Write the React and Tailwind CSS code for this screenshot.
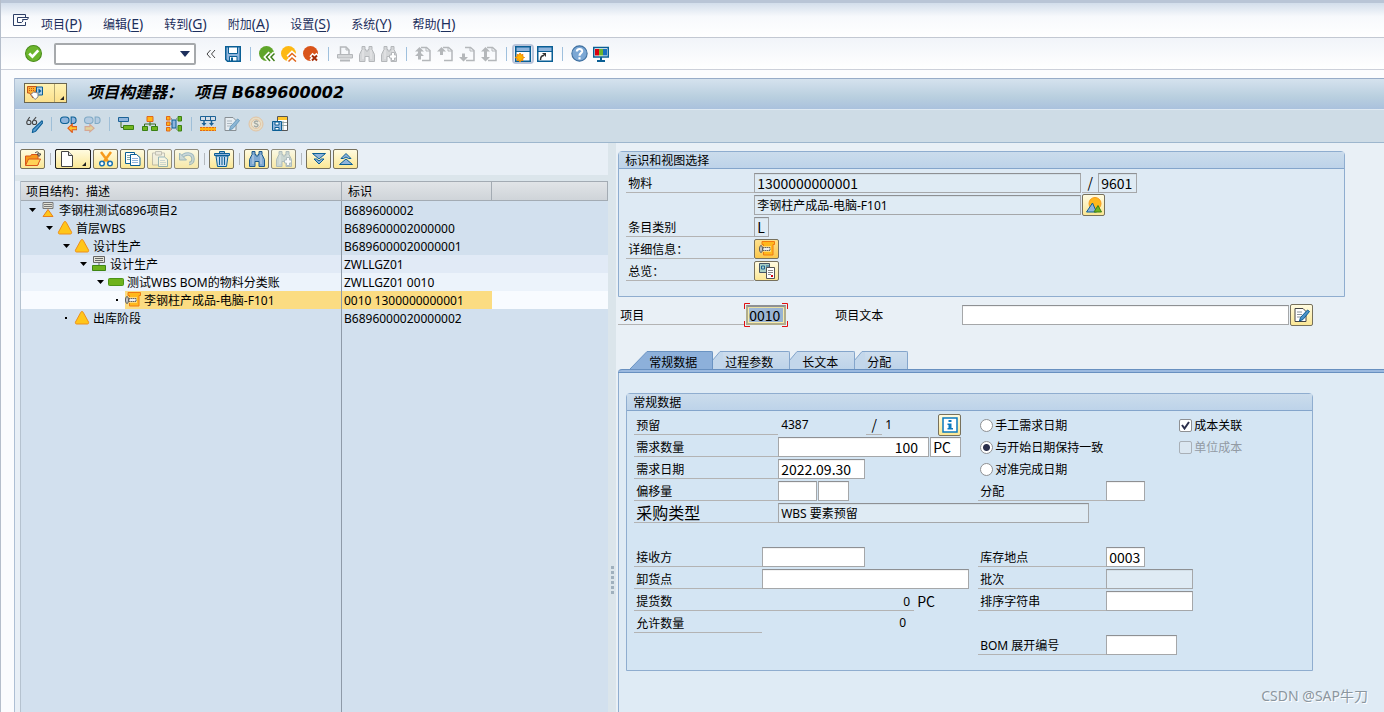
import clsx from 'clsx';

const SANS = "font-['Noto_Sans','Noto_Sans_CJK_SC',sans-serif]";
const CODE = "font-['Noto_Sans_CJK_SC',sans-serif]";

const BLUE = '#0a5f95';
const SKY = '#8fb4dc';
const GRAY = '#b4b7ba';

function Svg({ children, className = 'size-4', box = '0 0 16 16' }) {
  return (
    <svg viewBox={box} className={clsx('shrink-0', className)} fill="none" aria-hidden="true">
      {children}
    </svg>
  );
}

function Binoculars({ fill, stroke, plus }) {
  return (
    <Svg>
      <path d="M3 .500h3v3h1V5h2V3.500h1v-3h3v3l2.500 5v7H10V10.500H6v5H.500v-7L3 3.500z" fill={fill} stroke={stroke} />
      <path d="M4 4v9M12 4v9" stroke="#fff" strokeOpacity=".5" />
      {plus && <path d="M10.500 6.500h3v2.500h2v3h-2v2.500h-3V12h-2V9h2z" fill="#fff" stroke={stroke} />}
    </Svg>
  );
}

function PageNav({ up, down, top }) {
  return (
    <Svg>
      <path d="M6 1.500h5.500l3.500 3v10H7" stroke={GRAY} strokeWidth="1.500" />
      <path d="M11 1.500v3.500h4" stroke={GRAY} />
      {up && <path d="M4.500 1 0 5.500h3V9h3V5.500h3z" fill={GRAY} />}
      {top && <path d="M4.500 5.500 0 10h3v3.500h3V10h3z" fill={GRAY} />}
      {down && <path d="M4.500 15.500 0 11h3V7.500h3V11h3z" fill={GRAY} />}
    </Svg>
  );
}

const CircleIcon = ({ fill, children }) => (
  <Svg>
    <circle cx="7.500" cy="7.500" r="7.500" fill={fill} />
    {children}
  </Svg>
);

const CheckIcon = () => (
  <Svg className="size-[17px]">
    <circle cx="8" cy="8" r="7.500" fill="#6cb52d" stroke="#4a8c1c" />
    <path d="m4 8 3 3 5.500-6" stroke="#fff" strokeWidth="2.500" />
  </Svg>
);

const SaveIcon = () => (
  <Svg>
    <path d="M.750.750h14.500v14.500H2.500L.750 13.500z" fill={SKY} stroke={BLUE} strokeWidth="1.500" />
    <path d="M3.500 1h9v6.500h-9z" fill="#fff" stroke={BLUE} />
    <path d="M4.500 10.500h7.500V15H4.500z" fill="#fff" stroke={BLUE} />
    <path d="M6 11.500h2V15H6z" fill={BLUE} />
  </Svg>
);

const BackIcon = () => (
  <CircleIcon fill="#5fa52a">
    <path d="M11 7 7 11l4 4.500M15.500 7l-4 4 4 4.500" stroke="#fff" strokeWidth="4" />
    <path d="M11 7.500 7.500 11l3.500 4M15.500 7.500 12 11l3.500 4" stroke="#3d7d17" strokeWidth="1.500" />
  </CircleIcon>
);

const ExitIcon = () => (
  <CircleIcon fill="#fdb813">
    <path d="m7 11 4-4 4.500 4M7 15.500l4-4 4.500 4" stroke="#fff" strokeWidth="4" />
    <path d="m7.500 11 3.500-3.500 4 3.500M7.500 15.500 11 12l4 3.500" stroke="#e0661c" strokeWidth="1.500" />
  </CircleIcon>
);

const CancelIcon = () => (
  <CircleIcon fill="#d9541a">
    <path d="m8 8.500 7 6.500M15 8.500 8 15" stroke="#fff" strokeWidth="4.500" />
    <path d="m9 9.500 5 5M14 9.500l-5 5" stroke="#a32c08" strokeWidth="2" />
  </CircleIcon>
);

const PrintIcon = () => (
  <Svg>
    <path d="M3.500 8V1h5.500l3 3v4" stroke={GRAY} strokeWidth="1.500" />
    <path d="M9 1v3h3" stroke={GRAY} />
    <path d="M.500 8.500h15v3.500H.500z" fill="#d4d6d8" stroke={GRAY} />
    <path d="M3 14.500h10" stroke={GRAY} strokeWidth="2" />
  </Svg>
);

const NewSessionIcon = () => (
  <Svg>
    <path d="M.750.750h14.500v14.500H.750z" fill="#fff" stroke={BLUE} strokeWidth="1.500" />
    <path d="M1 1h14v4.500H1z" fill={SKY} stroke={BLUE} />
    <path d="m5 7 1 2 2-.5-.500 2 2 1-2 1 .500 2L6 14l-1 2-1-2-2 .500.500-2-2.500-1 2.500-1-.500-2L4 9z" fill="#ffb400" stroke="#f08a00" />
  </Svg>
);

const ShortcutIcon = () => (
  <Svg>
    <path d="M.750.750h14.500v14.500H.750z" fill="#fff" stroke={BLUE} strokeWidth="1.500" />
    <path d="M1 1h14v4.500H1z" fill={SKY} stroke={BLUE} />
    <path d="M3.500 14c0-3 1-4.500 3.500-4.500" stroke="#333" strokeWidth="1.500" />
    <path d="M5 7h4v4z" fill="#333" />
  </Svg>
);

const HelpIcon = () => (
  <Svg className="size-[17px]">
    <circle cx="8" cy="8" r="7.200" fill="#7ba7d4" stroke="#3e6f9f" />
    <path d="M5.500 6.200C5.500 3 10.800 3 10.500 6 10.300 7.600 8 7.800 8 10" stroke="#fff" strokeWidth="2" />
    <path d="M7 11.500h2v2H7z" fill="#fff" />
  </Svg>
);

const MonitorIcon = () => (
  <Svg>
    <path d="M.750 1.500h14.500v9.500H.750z" fill="#fff" stroke={BLUE} strokeWidth="1.500" />
    <path d="M2 3h4v6.500H2z" fill="#d9000d" />
    <path d="M6 3h4v6.500H6z" fill="#6cb52d" />
    <path d="M10 3h4v6.500h-4z" fill="#1a6fc0" />
    <path d="M8 11v3M4 15h8" stroke={BLUE} strokeWidth="2" />
  </Svg>
);

const MenuIcon = () => (
  <Svg className="h-3 w-4" box="0 0 16 12">
    <path d="M12.500 8v3.500h-12V.500h12V3" stroke="#2c3e66" />
    <path d="M4.500 3.500h11l-1 2H9.500l.500 1.500-1.500 1.500h-4z" fill="#fff" stroke="#2c3e66" />
  </Svg>
);

const GlassesIcon = () => (
  <Svg className="size-[17px]">
    <circle cx="2.700" cy="6" r="2" stroke="#444" />
    <circle cx="8" cy="6" r="2" stroke="#444" />
    <path d="m1.500 4 2-3M7 4l2.500-3" stroke="#444" />
    <path d="M15 4.500 16 6l-7 8.500-3 1 .500-3z" fill="#5b9bd0" stroke="#0a5f95" />
  </Svg>
);

const LinkArrowIcon = ({ faded, reverse }) => (
  <Svg className={clsx('size-[17px]', faded && 'opacity-40')}>
    <rect x=".5" y="1" width="8" height="6" rx="3" fill={SKY} stroke={BLUE} />
    <path d="M10.500 1h2C16 1 16 7 12.500 7h-2z" fill={SKY} stroke={BLUE} />
    <path
      d={reverse ? 'M9.500 11.500 5.500 8v2H1v3.500h4.500V15z' : 'm7.500 11.500 4-4V10H16v3h-4.500v2.500z'}
      fill="#ffc72c"
      stroke="#e05a1c"
    />
  </Svg>
);

const StepBarsIcon = () => (
  <Svg>
    <path d="M.500 1.500h10v4H.500z" fill={SKY} stroke="#1c6296" />
    <path d="M3 6v5.500h3" stroke="#3a6a20" />
    <path d="M5.500 9.500h10v4h-10z" fill="#72b51f" stroke="#3a8014" />
  </Svg>
);

const HierarchyIcon = () => (
  <Svg>
    <path d="M8 5v5M2.500 11V8h11v3" stroke="#3a6a20" />
    <path d="M5 .500h6v5H5z" fill="#ffb414" stroke="#e0661c" />
    <path d="M.500 10.500h5v4h-5zM9.500 10.500h6v4h-6z" fill="#72b51f" stroke="#3a8014" />
  </Svg>
);

const NetworkIcon = () => (
  <Svg>
    <path d="M3 3h3M3 8h3M3 13h3M10 3h3M10 13h3" stroke="#555" strokeDasharray="1" />
    <path d="M.500.500H4V4H.500zM.500 6H4v3.500H.500zM.500 11.500H4V15H.500z" fill="#ffb414" stroke="#e0661c" />
    <path d="M6 4h4v8H6z" fill={SKY} stroke={BLUE} />
    <path d="M12 .500h3.500V5H12zM12 9.500h3.500V15H12z" fill="#72b51f" stroke="#3a8014" />
  </Svg>
);

const PlanIcon = () => (
  <Svg>
    <path d="M.500.500h15v4H.500zM5.500.500v4M10.500.500v4" fill="#d4dde6" stroke="#1c6296" />
    <path d="M4 5v3M11.500 5v3" stroke="#1c6296" strokeWidth="1.500" />
    <path d="M1.500 7h5L4 10zM9 7h5l-2.500 3z" fill="#1c6296" />
    <path d="M0 11h16v4H0z" fill="#ffb414" />
    <path d="M0 11.500h16M0 14.500h16" stroke="#e0661c" strokeDasharray="2 1" />
  </Svg>
);

const NoteIcon = ({ faded }) => (
  <Svg className={clsx('size-4', faded && 'opacity-50')}>
    <path d="M1 1.500h8l3 3v10H1z" fill="#fff" stroke="#444" />
    <path d="M3 5h5M3 7.500h5M3 10h4" stroke="#8a949c" />
    <path d="m15.500 4.500-2-1.500-7 7.500-1 3.500 3.500-1.500z" fill="#4d92c8" stroke="#0a5f95" />
  </Svg>
);

const CostIcon = () => (
  <Svg className="size-4 opacity-60">
    <circle cx="8" cy="8" r="7" fill="#f6deb0" stroke="#efb478" />
    <circle cx="8" cy="8" r="4.500" fill="#fff3d6" stroke="#efb478" />
    <path d="M10 6c-1-1.500-4-1-3.500.700.500 1.300 3.500 1 3.500 2.500 0 1.800-3 2-4 .500" stroke="#8a8a7a" strokeWidth="1.500" />
  </Svg>
);

const CopySaveIcon = () => (
  <Svg>
    <path d="M5.500.500h10v14h-10z" fill="#fff" stroke="#555" />
    <path d="M6 1h9v3H6z" fill="#ffc72c" />
    <path d="M8 6.500h7M8 9.500h7M11 5v9" stroke="#9aa" />
    <path d="M.500 5.500h9v9h-9z" fill={SKY} stroke={BLUE} />
    <path d="M3 6h4v3H3zM3 11.500h4V14H3z" fill="#fff" stroke={BLUE} />
  </Svg>
);

const ObjectIcon = () => (
  <Svg className="h-3.5 w-[17px]" box="0 0 17 14">
    <path d="M.500.500h9V5H8v2.500H4.500L6 12 2.500 7H.500z" fill="#fbb034" stroke="#c8541a" />
    <path d="M2 2.500h6M2 4.500h5" stroke="#c8541a" strokeDasharray="1" />
    <path d="M9.500 1h6v8h-6z" fill="#a9cdea" stroke={BLUE} />
    <path d="m11.500 2.500 3 2.500-3 2.500z" fill={BLUE} />
    <path d="M4 8.500 6.500 6 11 7v4l-3 2.500z" fill="#fff" stroke="#888" />
  </Svg>
);

const FolderIcon = () => (
  <Svg>
    <path d="M.500 14V5h5l1-1.500h6.500V14z" fill="#f79a1c" stroke="#d9541a" />
    <path d="m.500 14.500 3-6.500h12l-3 6.500z" fill="#ffd257" stroke="#d9541a" />
    <path d="M10 2c2-2 4-1 4 1M12 3h4l-2 2.500z" stroke="#444" />
  </Svg>
);

const BlankPageIcon = () => (
  <Svg>
    <path d="M1.500.500h7l4 4v11h-11z" fill="#fff" stroke="#444" />
    <path d="M8.500.500v4h4" fill="#ddd" stroke="#444" />
  </Svg>
);

const CutIcon = () => (
  <Svg>
    <path d="m3 1 7 9.500M13 1 6 10.500" stroke="#f79a1c" strokeWidth="2.500" />
    <circle cx="4" cy="12.500" r="2.300" fill="#fff" stroke="#1a72b0" strokeWidth="1.500" />
    <circle cx="12" cy="12.500" r="2.300" fill="#fff" stroke="#1a72b0" strokeWidth="1.500" />
  </Svg>
);

const CopyIcon = () => (
  <Svg>
    <path d="M.500 1.500h9v11h-9z" fill="#fff" stroke={BLUE} />
    <path d="M2 4.500h3M2 6.500h3M2 8.500h3" stroke="#8aa" />
    <path d="M5.500 3.500h6l3.500 3v8H5.500z" fill="#fff" stroke={BLUE} />
    <path d="M7 7.500h6M7 9.500h6M7 11.500h6" stroke={SKY} />
  </Svg>
);

const PasteIcon = () => (
  <Svg className="size-4 opacity-50">
    <path d="M.500 2h12v12H.500z" fill="#eee" stroke="#777" />
    <path d="M3.500.500h6V4h-6z" fill="#ddd" stroke="#777" />
    <path d="M6.500 6h6l3 2.500v7h-9z" fill="#fff" stroke={BLUE} />
    <path d="M8 9.500h5M8 11.500h6M8 13.500h6" stroke={SKY} />
  </Svg>
);

const UndoIcon = () => (
  <Svg className="size-4 opacity-50">
    <path d="M2 7c4-6 12-5 12 1 0 3-2 4.500-4 4.500" stroke="#1c6296" strokeWidth="3.500" />
    <path d="M2 7c4-6 12-5 12 1 0 3-2 4.500-4 4.500" stroke={SKY} strokeWidth="1.500" />
    <path d="M.500 2v7h7z" fill={SKY} stroke="#1c6296" />
  </Svg>
);

const TrashIcon = () => (
  <Svg>
    <path d="M2 5h12l-1.500 10.500h-9z" fill="#c3d9ee" stroke={BLUE} />
    <path d="M.500 2.500h15v2H.500zM5.500.500h5v2h-5z" fill={SKY} stroke={BLUE} />
    <path d="M5.500 6v8M8 6v8M10.500 6v8" stroke={BLUE} />
  </Svg>
);

const ExpandIcon = () => (
  <Svg>
    <path d="M1.500 2.500h13L8 8z" fill={SKY} stroke={BLUE} />
    <path d="M3 8h2.500L8 10l2.500-2H13l-5 5z" fill={SKY} stroke={BLUE} />
  </Svg>
);

const CollapseIcon = () => (
  <Svg>
    <path d="M8 8 1.500 13.500h13z" fill={SKY} stroke={BLUE} />
    <path d="M8 2.500 3 7.500h2.500L8 6l2.500 1.500H13z" fill={SKY} stroke={BLUE} />
  </Svg>
);

const MaterialIcon = () => (
  <Svg>
    <path d="M3 .500h12.500v3H14V14H4.500V3.500H3z" fill="#ffb81c" stroke="#f07a10" />
    <path d="M4 5h8v6H4z" fill="#ffd978" />
    <ellipse cx="2" cy="8" rx="1.500" ry="3.500" fill="#ccc" stroke="#555" />
    <path d="M4 6.500h7v3H4z" fill="#eee" stroke="#666" strokeDasharray="1.500 .5" />
  </Svg>
);

const OverviewIcon = () => (
  <Svg>
    <path d="M.500.500h10v9h-10z" fill="#a9cfc4" stroke="#456" />
    <path d="M2.500 3h3v3h-3zM7 3h3M7 5h3" stroke="#1c6296" />
    <path d="M7.500 4.500h8v11h-8z" fill="#fff" stroke="#555" />
    <path d="M9 7.500h5M9 9.500h5M9 11.500h3" stroke="#888" />
    <path d="M12 12h2v2h-2z" fill="#d9000d" />
  </Svg>
);

const PictureIcon = () => (
  <Svg>
    <circle cx="9" cy="6.500" r="6" fill="#ffb81c" stroke="#f79a1c" />
    <path d="m.500 15 6-9 4 9z" fill={SKY} stroke={BLUE} />
    <path d="m8 15 4-6.500L15.500 15z" fill="#72b51f" stroke="#3a8014" />
  </Svg>
);

const InfoIcon = () => (
  <Svg>
    <path d="M1 1h14v14H1z" fill="#fff" stroke="#0a7abf" strokeWidth="1.500" />
    <path d="M6.500 3h3v2h-3zM5.500 6.500h4V11H11v1.500H5.500V11h1V8h-1z" fill="#0a7abf" />
  </Svg>
);

const ProjectNode = () => (
  <Svg>
    <path d="M3 .500h10v6H3z" fill="#e4e4d8" stroke="#777" />
    <path d="M4 2.500h8M4 4.500h8" stroke="#777" />
    <path d="m8 7.500 5 7H3z" fill="#ffc61a" stroke="#e8801c" />
  </Svg>
);

const WbsNode = () => (
  <Svg>
    <path d="M8 1.500c.600 0 1 .300 1.200.800L14.500 12c.400 1 0 2-1 2h-11c-1 0-1.400-1-1-2l5.300-9.700C7 1.800 7.400 1.500 8 1.500z" fill="#ffc61a" stroke="#ee8f1a" />
  </Svg>
);

const NetworkNode = () => (
  <Svg>
    <path d="M2.500.500h11v6h-11z" fill="#e4e4d8" stroke="#666" />
    <path d="M4 2.500h8M4 4.500h8M8 7v3" stroke="#666" />
    <path d="M1.500 9.500h13v5h-13z" fill="#6db21c" stroke="#3f8614" />
  </Svg>
);

const ActivityNode = () => (
  <Svg>
    <rect x=".5" y="4.500" width="15" height="7" rx="1" fill="#6db21c" stroke="#4c9418" />
  </Svg>
);

const menus = [
  { name: '项目', key: 'P' },
  { name: '编辑', key: 'E' },
  { name: '转到', key: 'G' },
  { name: '附加', key: 'A' },
  { name: '设置', key: 'S' },
  { name: '系统', key: 'Y' },
  { name: '帮助', key: 'H' },
];

// null stands for a separator
const systemTools = [
  { label: '保存', icon: <SaveIcon /> },
  null,
  { label: '返回', icon: <BackIcon /> },
  { label: '退出', icon: <ExitIcon /> },
  { label: '取消', icon: <CancelIcon /> },
  null,
  { label: '打印', icon: <PrintIcon /> },
  { label: '查找', icon: <Binoculars fill="#d4d6d8" stroke={GRAY} /> },
  { label: '继续查找', icon: <Binoculars fill="#d4d6d8" stroke={GRAY} plus /> },
  null,
  { label: '首页', icon: <PageNav up top /> },
  { label: '上一页', icon: <PageNav up /> },
  { label: '下一页', icon: <PageNav down /> },
  { label: '末页', icon: <PageNav up down /> },
  null,
  { label: '新建会话', icon: <NewSessionIcon />, active: true },
  { label: '快捷方式', icon: <ShortcutIcon /> },
  null,
  { label: '帮助', icon: <HelpIcon /> },
  { label: '定制布局', icon: <MonitorIcon /> },
];

const appTools = [
  { label: '显示/更改', icon: <GlassesIcon /> },
  null,
  { label: '关联', icon: <LinkArrowIcon /> },
  { label: '取消关联', icon: <LinkArrowIcon faded reverse /> },
  null,
  { label: '计划板', icon: <StepBarsIcon /> },
  { label: '层次图', icon: <HierarchyIcon /> },
  { label: '网络图', icon: <NetworkIcon /> },
  null,
  { label: '排程', icon: <PlanIcon /> },
  { label: '可用性', icon: <NoteIcon faded /> },
  { label: '成本', icon: <CostIcon /> },
  { label: '复制保存', icon: <CopySaveIcon /> },
];

const treeTools = [
  { label: '打开', icon: <FolderIcon /> },
  null,
  { label: '创建', icon: <BlankPageIcon />, menu: true },
  { label: '剪切', icon: <CutIcon /> },
  { label: '复制', icon: <CopyIcon /> },
  { label: '粘贴', icon: <PasteIcon />, disabled: true },
  { label: '撤消', icon: <UndoIcon />, disabled: true },
  null,
  { label: '删除', icon: <TrashIcon /> },
  null,
  { label: '查找', icon: <Binoculars fill="#7fa8d2" stroke="#1c5a8c" /> },
  { label: '继续查找', icon: <Binoculars fill="#c3d0c8" stroke="#a0b0b0" plus />, disabled: true },
  null,
  { label: '展开', icon: <ExpandIcon /> },
  { label: '折叠', icon: <CollapseIcon /> },
];

const nodes = [
  { depth: 0, icon: <ProjectNode />, name: '李钢柱测试6896项目2', id: 'B689600002', bg: 'bg-[#d2e0ee]' },
  { depth: 1, icon: <WbsNode />, name: '首层WBS', id: 'B689600002000000', bg: 'bg-[#d2e0ee]' },
  { depth: 2, icon: <WbsNode />, name: '设计生产', id: 'B6896000020000001', bg: 'bg-[#d2e0ee]' },
  { depth: 3, icon: <NetworkNode />, name: '设计生产', id: 'ZWLLGZ01', bg: 'bg-[#e1eaf6]' },
  { depth: 4, icon: <ActivityNode />, name: '测试WBS BOM的物料分类账', id: 'ZWLLGZ01 0010', bg: 'bg-[#ecf3fb]' },
  { depth: 5, icon: <MaterialIcon />, name: '李钢柱产成品-电脑-F101', id: '0010 1300000000001', bg: 'bg-[#f8fbff]', leaf: true, selected: true },
  { depth: 2, icon: <WbsNode />, name: '出库阶段', id: 'B6896000020000002', bg: 'bg-[#d2e0ee]', leaf: true },
];

const tabs = ['常规数据', '过程参数', '长文本', '分配'];

function MenuBar() {
  return (
    <nav className="flex h-[38px] items-center gap-[21px] border-b border-[#c3c8d2] border-t-[3px] border-t-[#b9c5d6] bg-linear-to-b from-[#d3deeb] via-[#f7f9fc] via-40% to-white pl-3 pt-2">
      <div className="flex items-center gap-3">
        <button type="button" aria-label="菜单" className="mb-2"><MenuIcon /></button>
        <MenuButton item={menus[0]} />
      </div>
      {menus.slice(1).map((item) => (
        <MenuButton key={item.key} item={item} />
      ))}
    </nav>
  );
}

const MenuButton = ({ item }) => (
  <button type="button" className="whitespace-nowrap text-xs text-[#1d2f5c]">
    {item.name}
    <span className="text-sm">(<u className="underline-offset-2">{item.key}</u>)</span>
  </button>
);

function SystemBar() {
  return (
    <div className="flex h-8 items-center border-b border-[#ccd0da] bg-linear-to-b from-[#f1f4f9] to-white pl-[21px]">
      <button type="button" aria-label="回车" className="flex w-[22px] justify-center"><CheckIcon /></button>
      <div className="relative ml-2.5 mr-1">
        <select aria-label="命令" className="block h-[22px] w-[142px] appearance-none rounded-xs border-2 border-[#a6a9ac] bg-white text-xs">
          <option></option>
        </select>
        <Svg className="pointer-events-none absolute right-1.5 top-2 h-1.5 w-2.5" box="0 0 10 6">
          <path d="M0 0h10L5 6z" fill="#1d2f5c" />
        </Svg>
      </div>
      <button type="button" aria-label="收起" className="flex w-[22px] justify-center">
        <Svg className="size-2.5" box="0 0 10 10">
          <path d="M4.500 1 1 5l3.500 4M9 1 5.500 5 9 9" stroke="#444" />
        </Svg>
      </button>
      {systemTools.map((tool, i) =>
        tool ? (
          <button
            key={i}
            type="button"
            aria-label={tool.label}
            className={clsx(
              'flex h-5 w-[22px] items-center justify-center',
              tool.active && 'rounded-sm border-2 border-[#b9c4da] bg-[#e8eef8]'
            )}
          >
            {tool.icon}
          </button>
        ) : (
          <div key={i} className="flex w-3 justify-center"><div className="h-3.5 w-px bg-[#9fc0dd]" /></div>
        )
      )}
    </div>
  );
}

function TitleBar() {
  return (
    <header className="flex h-8 items-center gap-5 border-b border-t border-b-[#dfe9f2] border-t-[#97acc8] bg-linear-to-b from-[#d5e2ee] via-[#b9cfdf] via-60% to-[#aac1dd] pl-[9px]">
      <button type="button" aria-label="服务" className="mb-0.5 flex h-5 w-[43px] items-center border border-[#6b6650] bg-linear-to-b from-[#fff3b4] to-[#fbe08c] pl-0.5">
        <ObjectIcon />
        <span className="ml-auto flex h-full w-3 items-end justify-end border-l border-[#b5a873] p-0.5"><Corner /></span>
      </button>
      <h1 className="pb-0.5 font-['DejaVu_Sans','Noto_Sans_CJK_SC',sans-serif] text-base font-bold italic text-black">
        项目构建器：&nbsp; 项目 B689600002
      </h1>
    </header>
  );
}

const Corner = () => (
  <Svg className="size-1" box="0 0 4 4">
    <path d="M4 0v4H0z" fill="#222" />
  </Svg>
);

function AppBar() {
  return (
    <div className="flex h-[33px] items-center border-b border-[#9db6cd] bg-[#cedce6] pb-1 pl-[7px]">
      {appTools.map((tool, i) =>
        tool ? (
          <button key={i} type="button" aria-label={tool.label} className="flex w-6 justify-center">{tool.icon}</button>
        ) : (
          <div key={i} className="flex w-2.5 justify-center"><div className="h-3.5 w-px bg-[#9fbfd8]" /></div>
        )
      )}
    </div>
  );
}

const YellowButton = ({ label, className, children, ...props }) => (
  <button
    type="button"
    aria-label={label}
    className={clsx(
      'flex shrink-0 items-center justify-center rounded-xs border border-[#77715c] bg-linear-to-b',
      className
    )}
    {...props}
  >
    {children}
  </button>
);

const PALE = 'from-[#fffbe0] to-[#fbe794]';

function TreeToolbar() {
  return (
    <div className="flex h-8 items-center gap-0.5 bg-[#e8eff6] pl-[5px]">
      {treeTools.map((tool, i) =>
        tool ? (
          <YellowButton
            key={i}
            label={tool.label}
            disabled={tool.disabled}
            className={clsx(
              'h-5',
              PALE,
              tool.menu ? 'w-9 gap-1.5 outline outline-[#222] -outline-offset-1' : 'w-[25px]',
              tool.disabled && 'opacity-80'
            )}
          >
            {tool.icon}
            {tool.menu && <span className="mt-2.5"><Corner /></span>}
          </YellowButton>
        ) : (
          <div key={i} className="flex w-1.5 justify-center"><div className="h-3 w-px bg-[#b4b9be]" /></div>
        )
      )}
    </div>
  );
}

function TreeRow({ node }) {
  return (
    <tr className={clsx('h-[18px]', node.bg)}>
      <td className="border-r border-[#8e9aa8] p-0">
        <div className="flex h-[18px] items-center" style={{ paddingLeft: 3 + node.depth * 17 }}>
          <span className="flex w-4 shrink-0 justify-center">
            {node.leaf ? (
              <span className="size-0.5 bg-black" />
            ) : (
              <Svg className="h-1 w-[7px]" box="0 0 7 4"><path d="M0 0h7L3.500 4z" fill="#000" /></Svg>
            )}
          </span>
          <span className={clsx('flex h-full flex-1 items-center gap-[3px] whitespace-nowrap', node.selected && 'bg-[#fbdc82]')}>
            {node.icon}
            <span className="pt-0.5">{node.name}</span>
          </span>
        </div>
      </td>
      <td className={clsx('p-0 pl-0.5 pt-0.5', node.selected && 'bg-[#fbdc82]')}>{node.id}</td>
      <td className="p-0"></td>
    </tr>
  );
}

function ProjectTree() {
  const th = 'border-b border-r border-t border-[#a3abb3] p-0 pt-0.5 font-normal';
  return (
    <section className="flex flex-[594_1_0%] flex-col bg-[#e8eff6]">
      <TreeToolbar />
      <div className="flex flex-1 flex-col border-t-[6px] border-[#dbe5eb] bg-[#e8eff6] pl-[5px]">
        <table className="w-full table-fixed border-separate border-spacing-0 border-l border-[#b5c2cf] text-xs leading-4 text-black">
          <colgroup>
            <col className="w-[321px]" />
            <col className="w-[150px]" />
            <col />
          </colgroup>
          <thead>
            <tr className="h-5 bg-linear-to-b from-[#e2e5e8] to-[#ced3d8] text-left">
              <th className={clsx(th, 'pl-[5px]')}>项目结构：描述</th>
              <th className={clsx(th, 'pl-1.5')}>标识</th>
              <th aria-label="空列" className={th}></th>
            </tr>
          </thead>
          <tbody>
            {nodes.map((node) => (
              <TreeRow key={node.id} node={node} />
            ))}
          </tbody>
        </table>
        <div className="flex-1 border-l border-[#b5c2cf] bg-[#d2e0ee]">
          <div className="h-full w-[321px] border-r border-[#8e9aa8]" />
        </div>
      </div>
    </section>
  );
}

function GroupBox({ title, className, children }) {
  return (
    <section className={clsx('w-full rounded-t-sm border border-[#8fadcf]', className)}>
      <h2 className="h-[17px] border-b border-[#84a5cb] bg-linear-to-b from-[#cbdcec] to-[#bdd3e9] pl-1.5 text-xs leading-[18px]">{title}</h2>
      <div className="flex flex-col gap-0.5 px-[7px] pb-[15px] pt-1">{children}</div>
    </section>
  );
}

const Row = ({ children }) => <div className="flex h-5 items-center">{children}</div>;

const Left = ({ children }) => <div className="flex h-5 w-[344px] shrink-0 items-center">{children}</div>;

const Label = ({ className = 'w-32', large, children, ...props }) => (
  <label
    className={clsx(
      'flex h-5 shrink-0 items-end border-b border-[#b3b3b3] pl-0.5',
      large ? 'text-base leading-[18px]' : 'text-xs leading-4',
      className
    )}
    {...props}
  >
    {children}
  </label>
);

const Slash = () => (
  <span className={clsx('h-5 w-4 shrink-0 border-b border-[#b3b3b3] text-center text-sm leading-[18px]', CODE)}>/</span>
);

const Field = ({ className, font = CODE, readOnly, ...props }) => (
  <input
    type="text"
    readOnly={readOnly}
    className={clsx(
      'h-5 min-w-0 border border-[#a5a7a9] border-t-[#8e9093] px-0.5 outline-none inset-shadow-2xs',
      readOnly ? 'bg-[#dfebf4]' : 'bg-white',
      font,
      font === SANS ? 'text-xs' : 'text-sm',
      className
    )}
    {...props}
  />
);

const Radio = ({ children, ...props }) => (
  <label className="flex w-[200px] shrink-0 items-center gap-0.5 pl-0.5 text-xs">
    <input
      type="radio"
      name="date-mode"
      className="size-[13px] appearance-none rounded-full border border-[#8e9093] bg-white checked:bg-[radial-gradient(#2a2f4c_0_3px,#fff_4px)]"
      {...props}
    />
    <span className="pt-0.5">{children}</span>
  </label>
);

const Checkbox = ({ disabled, defaultChecked, children }) => (
  <label className={clsx('flex items-center gap-0.5 whitespace-nowrap pl-px text-xs', disabled && 'text-[#929aa3]')}>
    <span className="relative flex">
      <input
        type="checkbox"
        disabled={disabled}
        defaultChecked={defaultChecked}
        className="peer size-[13px] appearance-none rounded-xs border border-[#8e9093] bg-white disabled:border-[#a9b0b7] disabled:bg-[#dbe7f1]"
      />
      <Svg className="pointer-events-none absolute left-0.5 top-0.5 hidden size-[9px] peer-checked:block" box="0 0 9 9">
        <path d="m1 4 2.500 3.500L8 1" stroke="#2a2f4c" strokeWidth="2" />
      </Svg>
    </span>
    <span className="pt-0.5">{children}</span>
  </label>
);

function MaterialGroup() {
  return (
    <GroupBox title="标识和视图选择" className="max-w-[727px] bg-[#deeaf4]">
      <Row>
        <Label htmlFor="material">物料</Label>
        <Field id="material" readOnly defaultValue="1300000000001" className="mr-px w-[327px]" />
        <Slash />
        <Field aria-label="工厂" readOnly defaultValue="9601" className="w-[39px]" />
      </Row>
      <Row>
        <span className="w-32 shrink-0" />
        <Field aria-label="物料描述" readOnly font={SANS} defaultValue="李钢柱产成品-电脑-F101" className="w-[327px]" />
        <YellowButton label="图片" className={clsx('ml-px h-[22px] w-[23px]', PALE)}><PictureIcon /></YellowButton>
      </Row>
      <Row>
        <Label htmlFor="category">条目类别</Label>
        <Field id="category" readOnly defaultValue="L" className="w-[15px]" />
      </Row>
      <Row>
        <Label htmlFor="detail">详细信息：</Label>
        <YellowButton id="detail" label="详细信息" className="h-5 w-[25px] from-[#fde08a] to-[#fbc84a]"><MaterialIcon /></YellowButton>
      </Row>
      <Row>
        <Label htmlFor="overview">总览：</Label>
        <YellowButton id="overview" label="总览" className={clsx('h-5 w-[25px]', PALE)}><OverviewIcon /></YellowButton>
      </Row>
    </GroupBox>
  );
}

function ItemRow() {
  return (
    <div className="mt-2 flex h-5 items-center">
      <Label htmlFor="item" className="w-[126px]">项目</Label>
      <div className="relative ml-0.5 flex">
        <Field id="item" defaultValue="0010" className="w-10 border-2 border-[#b0ad8c] bg-linear-to-r from-[#a3bbd8] to-[#97b2d2] px-px shadow-[0_0_0_1px_#f5ebab_inset]" />
        <Svg className="pointer-events-none absolute -left-0.5 -top-0.5 h-6 w-11" box="0 0 44 24">
          <path d="M.500 6V.500H6M38 .500h5.500V6M.500 18v5.500H6M38 23.500h5.500V18" stroke="#e01010" />
        </Svg>
      </div>
      <label htmlFor="item-text" className="ml-[49px] w-[127px] shrink-0 pt-0.5 text-xs">项目文本</label>
      <Field id="item-text" className="w-[327px]" />
      <YellowButton label="编辑文本" className={clsx('ml-px h-[22px] w-[23px]', PALE)}><NoteIcon /></YellowButton>
    </div>
  );
}

function TabList() {
  return (
    <div role="tablist" className="mt-[26px] flex pl-3">
      {tabs.map((name, i) => {
        const active = i === 0;
        return (
          <button key={name} type="button" role="tab" aria-selected={active} className="flex h-[18px] text-xs">
            <Svg className={clsx('h-[18px]', active ? 'w-[19px]' : 'w-2.5')} box={active ? '0 0 19 18' : '0 0 10 18'}>
              {active ? (
                <path d="M0 18 17 .500h3V18" fill="#8db0da" stroke="#6a93c2" />
              ) : (
                <path d="M-1 18V10L7 .500h4V18" fill="#c3d7eb" stroke="#84a5cb" />
              )}
            </Svg>
            <span
              className={clsx(
                'h-full whitespace-nowrap rounded-tr-xs border-r border-t leading-[21px]',
                active
                  ? 'border-[#6a93c2] bg-[#8db0da] pr-[15px]'
                  : 'border-[#84a5cb] bg-linear-to-b from-[#cddded] to-[#bdd3e9] pl-0.5 pr-4'
              )}
            >
              {name}
            </span>
          </button>
        );
      })}
    </div>
  );
}

function GeneralData() {
  return (
    <GroupBox title="常规数据" className="max-w-[687px] bg-[#d4e5f3]">
      <Row>
        <Left>
          <Label className="w-36">预留</Label>
          <span className="w-[88px] pl-[3px] text-xs">4387</span>
          <Slash />
          <span className="w-14 pl-[3px] text-xs">1</span>
          <YellowButton label="预留信息" className={clsx('h-[22px] w-[23px]', PALE)}><InfoIcon /></YellowButton>
        </Left>
        <Radio>手工需求日期</Radio>
        <Checkbox defaultChecked>成本关联</Checkbox>
      </Row>
      <Row>
        <Left>
          <Label htmlFor="quantity" className="w-36">需求数量</Label>
          <Field id="quantity" defaultValue="100" className="mr-px w-[151px] pr-2.5 text-right" />
          <Field aria-label="单位" defaultValue="PC" className="w-[31px]" />
        </Left>
        <Radio defaultChecked>与开始日期保持一致</Radio>
        <Checkbox disabled>单位成本</Checkbox>
      </Row>
      <Row>
        <Left>
          <Label htmlFor="req-date" className="w-36">需求日期</Label>
          <Field id="req-date" defaultValue="2022.09.30" className="w-[87px]" />
        </Left>
        <Radio>对准完成日期</Radio>
      </Row>
      <Row>
        <Left>
          <Label htmlFor="offset" className="w-36">偏移量</Label>
          <Field id="offset" className="mr-px w-[39px]" />
          <Field aria-label="偏移单位" className="w-[31px]" />
        </Left>
        <Label htmlFor="distribution">分配</Label>
        <Field id="distribution" className="w-[39px]" />
      </Row>
      <Row>
        <Label htmlFor="procurement" className="w-36" large>采购类型</Label>
        <Field id="procurement" readOnly font={SANS} defaultValue="WBS 要素预留" className="w-[311px]" />
      </Row>
      <Row />
      <Row>
        <Left>
          <Label htmlFor="recipient">接收方</Label>
          <Field id="recipient" className="w-[103px]" />
        </Left>
        <Label htmlFor="storage">库存地点</Label>
        <Field id="storage" defaultValue="0003" className="w-[39px]" />
      </Row>
      <Row>
        <Left>
          <Label htmlFor="unload">卸货点</Label>
          <Field id="unload" className="w-[207px]" />
        </Left>
        <Label htmlFor="batch">批次</Label>
        <Field id="batch" readOnly className="w-[87px]" />
      </Row>
      <Row>
        <Left>
          <Label className="w-[280px] justify-between pr-1">提货数 <span>0</span></Label>
          <span className={clsx('pl-[3px] text-sm', CODE)}>PC</span>
        </Left>
        <Label htmlFor="sort">排序字符串</Label>
        <Field id="sort" className="w-[87px]" />
      </Row>
      <Row>
        <Left>
          <Label>允许数量</Label>
          <span className="w-36 text-right text-xs">0</span>
        </Left>
      </Row>
      <Row>
        <Left />
        <Label htmlFor="bom">BOM 展开编号</Label>
        <Field id="bom" className="w-[71px]" />
      </Row>
    </GroupBox>
  );
}

function DetailPane() {
  return (
    <section className="flex min-w-0 flex-[767_1_0%] flex-col bg-[#e9f0f6] pl-0.5 pt-2">
      <MaterialGroup />
      <ItemRow />
      <TabList />
      <div className="h-1 rounded-tl-sm border-y border-[#6890c0] bg-[#9bb9df]" />
      <div className="flex-1 border-l border-[#8fadcf] bg-[#dfebf5] pb-6 pl-[7px] pt-5">
        <GeneralData />
      </div>
    </section>
  );
}

export default function App() {
  return (
    <div className={clsx('relative flex min-h-screen flex-col border-l border-[#b5becb] bg-[#fbfcfe] text-black', SANS)}>
      <MenuBar />
      <SystemBar />
      <main className="ml-[13px] mt-2 flex flex-1 flex-col border-l border-[#aebfd4]">
        <TitleBar />
        <AppBar />
        <div className="flex flex-1">
          <ProjectTree />
          <div className="flex w-2 flex-col items-center justify-end gap-0.5 bg-[#dbe5eb] pb-[118px]">
            {[0, 1, 2, 3, 4, 5].map((i) => (
              <span key={i} className="size-[3px] bg-[#9fb0bd]" />
            ))}
          </div>
          <DetailPane />
        </div>
      </main>
      <div className="pointer-events-none absolute bottom-1.5 right-4 text-sm text-[#8b969f] [text-shadow:1px_1px_0_#fff]">CSDN @SAP牛刀</div>
    </div>
  );
}
